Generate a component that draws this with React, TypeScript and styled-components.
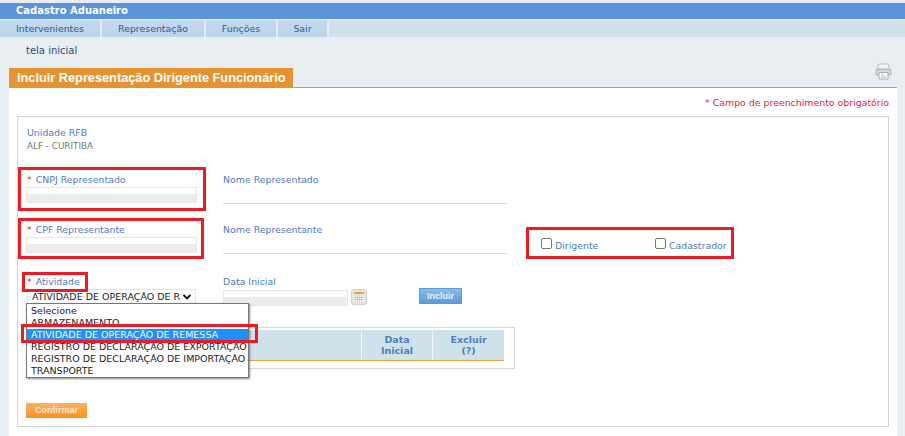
import React from 'react';
import styled, { createGlobalStyle } from 'styled-components';

const GlobalStyle = createGlobalStyle`
  html, body {
    margin: 0;
    padding: 0;
    background: #e9eef3;
    font-family: "DejaVu Sans", Verdana, sans-serif;
    font-size: 9.4px;
  }
`;

const red = '#ed1c24';

const Page = styled.div`
  width: 905px;
  height: 436px;
  overflow: hidden;
  padding-top: 3px;
  box-sizing: border-box;
`;

const Header = styled.div`
  height: 16px;
  line-height: 15px;
  padding-left: 16px;
  background: #5b94db;
  color: #fff;
  font-size: 10px;
  font-weight: bold;
`;

const MenuBar = styled.div`
  display: flex;
  height: 17px;
  margin-top: 1px;
  background: #d3e0ec;
`;

const MenuItem = styled.div<{ $width: number }>`
  width: ${(p) => p.$width}px;
  line-height: 17px;
  text-align: center;
  color: #2f5b8f;
  font-size: 9.4px;
  background: linear-gradient(#c3d9ef, #bcd3e9);
  border-right: 2px solid #e6eef5;
  box-sizing: border-box;
`;

const Crumb = styled.div`
  height: 31px;
  padding: 8px 0 0 26px;
  box-sizing: border-box;
  color: #2b4f76;
  font-size: 10px;
`;

const TitleRow = styled.div`
  display: flex;
  align-items: flex-start;
  justify-content: space-between;
  margin: 0 8px 0 9px;
  height: 19px;
  border-bottom: 1px solid #e59331;
`;

const TitleTab = styled.div`
  width: 284px;
  height: 19px;
  line-height: 19px;
  padding-left: 8px;
  box-sizing: border-box;
  background: #e59331;
  color: #fff;
  font-family: "Liberation Sans", Arial, sans-serif;
  font-size: 12.75px;
  font-weight: bold;
  white-space: nowrap;
`;

const PrinterIcon = styled.svg`
  margin: -5px 5px 0 0;
`;

const Panel = styled.div`
  margin: 0 8px 0 9px;
  height: 350px;
  padding: 8px 8px 0 8px;
  box-sizing: border-box;
  background: #fff;
`;

const Required = styled.div`
  height: 20px;
  text-align: right;
  color: #e0243c;
  line-height: 14px;
`;

const Fieldset = styled.div`
  height: 311px;
  border: 1px solid #d4d4d4;
  padding: 9px 0 0 9px;
  box-sizing: border-box;
  position: relative;
`;

const Label = styled.div`
  height: 12px;
  color: #4f7cbd;
  line-height: 14px;
  white-space: nowrap;
`;

const Star = styled.span`
  color: #e0243c;
  margin-right: 4px;
`;

const Value = styled.div`
  margin-top: 3px;
  color: #777;
  font-size: 8.8px;
  line-height: 11px;
`;

const FormRow = styled.div<{ $height: number }>`
  display: flex;
  height: ${(p) => p.$height}px;
`;

const Field = styled.div`
  position: relative;
  width: 196px;
  flex: none;
`;

const NameField = styled.div`
  width: 284px;
  flex: none;
`;

const Underline = styled.div`
  height: 13px;
  margin-top: 5px;
  border-bottom: 1px solid #d8d8d8;
`;

const TextInput = styled.div<{ $width: number; $offset?: number }>`
  width: ${(p) => p.$width}px;
  height: 16px;
  margin: 2px 0 0 ${(p) => p.$offset ?? 0}px;
  box-sizing: border-box;
  border: 1px solid #e6e6e6;
  background: linear-gradient(#fff 0 45%, #ececec 45% 100%);
`;

const Highlight = styled.div<{ $top: number; $left: number; $width: number; $height: number }>`
  position: absolute;
  top: ${(p) => p.$top}px;
  left: ${(p) => p.$left}px;
  width: ${(p) => p.$width}px;
  height: ${(p) => p.$height}px;
  box-sizing: border-box;
  border: 3px solid ${red};
  pointer-events: none;
  z-index: 3;
`;

const Checks = styled.div`
  display: flex;
  align-items: center;
  width: 208px;
  height: 32px;
  margin: 4px 0 0 19px;
  padding-left: 12px;
  box-sizing: border-box;
  border: 3px solid ${red};
`;

const CheckItem = styled.label<{ $width: number }>`
  display: flex;
  align-items: center;
  gap: 3px;
  width: ${(p) => p.$width}px;
  color: #4f7cbd;
`;

const CheckBox = styled.span`
  width: 9px;
  height: 9px;
  border: 1px solid #767676;
  border-radius: 2px;
  background: #fff;
`;

const CheckText = styled.span`
  padding-top: 4px;
`;

const Select = styled.div`
  display: flex;
  align-items: center;
  justify-content: space-between;
  width: 169px;
  height: 15px;
  margin-top: 2px;
  padding: 0 3px 0 4px;
  box-sizing: border-box;
  border: 1px solid #e4e4e4;
  color: #222;
  font-size: 9.5px;
  white-space: nowrap;
`;

const Dropdown = styled.div`
  position: absolute;
  top: 186px;
  left: 8px;
  width: 223px;
  height: 75px;
  padding-top: 1px;
  box-sizing: border-box;
  background: #fff;
  border: 1px solid #767676;
  box-shadow: 1px 1px 2px rgba(0, 0, 0, 0.45);
  z-index: 2;
`;

const Option = styled.div<{ $active?: boolean }>`
  height: 12px;
  line-height: 12px;
  padding-left: 4px;
  color: ${(p) => (p.$active ? '#fff' : '#222')};
  background: ${(p) => (p.$active ? '#1e90ff' : 'transparent')};
  font-size: 9.5px;
  white-space: nowrap;
`;

const DateRow = styled.div`
  display: flex;
  align-items: flex-start;
  margin-top: 1px;
`;

const CalendarIcon = styled.svg`
  margin: 1px 0 0 3px;
  flex: none;
`;

const BlueButton = styled.div`
  width: 43px;
  height: 16px;
  margin-left: 52px;
  line-height: 15px;
  text-align: center;
  background: linear-gradient(#8dbce6, #5a9bd6);
  border: 1px solid #5a9bd6;
  box-sizing: border-box;
  color: #e8f1f9;
  font-family: "Liberation Sans", Arial, sans-serif;
  font-size: 9px;
  font-weight: bold;
`;

const TableBox = styled.div`
  width: 488px;
  height: 42px;
  margin-top: 6px;
  padding-top: 2px;
  box-sizing: border-box;
  border: 1px solid #d8d8d8;
`;

const TableHead = styled.div`
  display: grid;
  grid-template-columns: 333px 71px 72px;
  width: 476px;
  height: 31px;
  background: #cfe2ec;
  border-bottom: 1px solid #e9a13f;
  box-sizing: border-box;
`;

const HeadCell = styled.div`
  padding-top: 4px;
  box-sizing: border-box;
  border-left: 1px solid #f3f7fa;
  text-align: center;
  color: #4f7cbd;
  font-size: 9.5px;
  font-weight: bold;
  line-height: 11px;
`;

const ConfirmButton = styled.div`
  width: 61px;
  height: 15px;
  margin-top: 34px;
  margin-left: -1px;
  line-height: 15px;
  text-align: center;
  background: linear-gradient(#fbb25f, #f8931f);
  color: #fde9d2;
  font-family: "Liberation Sans", Arial, sans-serif;
  font-size: 9px;
  font-weight: bold;
`;

const Printer = () => (
  <PrinterIcon width="17" height="17" viewBox="0 0 17 17">
    <path d="M4.5 1h8q1.500 0 1.500 2v3H3V3q0-2 1.500-2z" fill="#f4f5f6" stroke="#b4b8bb" />
    <path d="M1 6.500h15v5.500H1z" fill="#d5d8da" stroke="#b4b8bb" />
    <path d="M4 9.500h9v6.500H4z" fill="#f9f9f9" stroke="#a9adb0" />
    <path d="M6 12h3M6 14h5" stroke="#b5b8ba" />
  </PrinterIcon>
);

const Calendar = () => (
  <CalendarIcon width="16" height="16" viewBox="0 0 16 16">
    <rect x="0.500" y="0.500" width="15" height="15" rx="2" fill="#e6e4de" stroke="#cfcfcf" />
    <rect x="3" y="3" width="10" height="2" fill="#e2a63c" />
    <path d="M3 6.500h10v6.500H3z" fill="#fff" />
    <path d="M4.500 6v7M6.500 6v7M8.500 6v7M10.500 6v7M3 8.500h10M3 10.500h10" stroke="#b9b9b9" strokeWidth="0.7" />
  </CalendarIcon>
);

const options = [
  'Selecione',
  'ARMAZENAMENTO',
  'ATIVIDADE DE OPERAÇÃO DE REMESSA',
  'REGISTRO DE DECLARAÇÃO DE EXPORTAÇÃO',
  'REGISTRO DE DECLARAÇÃO DE IMPORTAÇÃO',
  'TRANSPORTE',
];

const App = () => (
  <Page>
    <GlobalStyle />
    <Header>Cadastro Aduaneiro</Header>
    <MenuBar>
      <MenuItem $width={102}>Intervenientes</MenuItem>
      <MenuItem $width={104}>Representação</MenuItem>
      <MenuItem $width={72}>Funções</MenuItem>
      <MenuItem $width={51}>Sair</MenuItem>
    </MenuBar>
    <Crumb>tela inicial</Crumb>
    <TitleRow>
      <TitleTab>Incluir Representação Dirigente Funcionário</TitleTab>
      <Printer />
    </TitleRow>
    <Panel>
      <Required>* Campo de preenchimento obrigatório</Required>
      <Fieldset>
        <FormRow $height={47}>
          <Field>
            <Label>Unidade RFB</Label>
            <Value>ALF - CURITIBA</Value>
          </Field>
        </FormRow>
        <FormRow $height={50}>
          <Field>
            <Highlight $top={-6} $left={-9} $width={188} $height={44} />
            <Label>
              <Star>*</Star>CNPJ Representado
            </Label>
            <TextInput $width={171} $offset={-1} />
          </Field>
          <NameField>
            <Label>Nome Representado</Label>
            <Underline />
          </NameField>
        </FormRow>
        <FormRow $height={52}>
          <Field>
            <Highlight $top={-5} $left={-9} $width={186} $height={41} />
            <Label>
              <Star>*</Star>CPF Representante
            </Label>
            <TextInput $width={171} $offset={-1} />
          </Field>
          <NameField>
            <Label>Nome Representante</Label>
            <Underline />
          </NameField>
          <Checks>
            <CheckItem $width={114}>
              <CheckBox />
              <CheckText>Dirigente</CheckText>
            </CheckItem>
            <CheckItem $width={76}>
              <CheckBox />
              <CheckText>Cadastrador</CheckText>
            </CheckItem>
          </Checks>
        </FormRow>
        <FormRow $height={46}>
          <Field>
            <Highlight $top={-3} $left={-5} $width={66} $height={20} />
            <Label>
              <Star>*</Star>Atividade
            </Label>
            <Select>
              ATIVIDADE DE OPERAÇÃO DE R
              <svg width="10" height="8" viewBox="0 0 10 8">
                <path d="M1.500 2 5 5.500 8.500 2" fill="none" stroke="#111" strokeWidth="1.8" />
              </svg>
            </Select>
          </Field>
          <NameField>
            <Label>Data Inicial</Label>
            <DateRow>
              <TextInput $width={125} />
              <Calendar />
              <BlueButton>Incluir</BlueButton>
            </DateRow>
          </NameField>
        </FormRow>
        <Dropdown>
          {options.map((o, i) => (
            <Option key={o} $active={i === 2}>
              {o}
            </Option>
          ))}
        </Dropdown>
        <Highlight $top={207} $left={3} $width={237} $height={19} />
        <TableBox>
          <TableHead>
            <HeadCell />
            <HeadCell>
              Data
              <br />
              Inicial
            </HeadCell>
            <HeadCell>
              Excluir
              <br />
              (?)
            </HeadCell>
          </TableHead>
        </TableBox>
        <ConfirmButton>Confirmar</ConfirmButton>
      </Fieldset>
    </Panel>
  </Page>
);

export default App;
